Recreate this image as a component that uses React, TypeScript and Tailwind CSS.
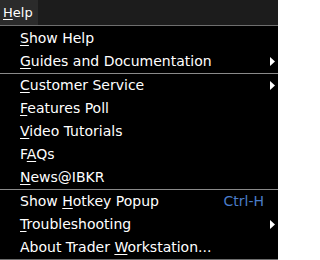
import React from "react";

type Item = {
  label: string;
  key: number; // index of underlined character
  sub?: boolean;
  hotkey?: string;
};

const groups: Item[][] = [
  [
    { label: "Show Help", key: 0 },
    { label: "Guides and Documentation", key: 0, sub: true },
  ],
  [
    { label: "Customer Service", key: 0, sub: true },
    { label: "Features Poll", key: 0 },
    { label: "Video Tutorials", key: 0 },
    { label: "FAQs", key: 1 },
    { label: "News@IBKR", key: 0 },
  ],
  [
    { label: "Show Hotkey Popup", key: 5, hotkey: "Ctrl-H" },
    { label: "Troubleshooting", key: 0, sub: true },
    { label: "About Trader Workstation...", key: 13 },
  ],
];

function Mnemonic({ text, at }: { text: string; at: number }) {
  return (
    <span className="whitespace-pre">
      {text.slice(0, at)}
      <span className="underline underline-offset-2 decoration-1">{text[at]}</span>
      {text.slice(at + 1)}
    </span>
  );
}

function Arrow() {
  return (
    <svg width="5" height="9" viewBox="0 0 5 9" className="shrink-0">
      <path d="M0 0 L5 4.5 L0 9 Z" fill="#ffffff" />
    </svg>
  );
}

function Row({ item }: { item: Item }) {
  return (
    <div className="flex h-[23px] items-center pl-5 pr-[3px]">
      <span className="flex-1">
        <Mnemonic text={item.label} at={item.key} />
      </span>
      {item.hotkey && <span className="mr-[11px] text-[#4a7cc9]">{item.hotkey}</span>}
      {item.sub && <Arrow />}
    </div>
  );
}

export default function App() {
  return (
    <div
      className="h-[260px] w-[278px] overflow-hidden bg-black text-white"
      style={{ fontFamily: '"DejaVu Sans", sans-serif' }}
    >
      <div className="flex h-[25px] bg-[#1c1c1c] text-[13px]">
        <div className="flex items-center bg-[#2b2b2b] pl-[3px] pr-[5px]">
          <Mnemonic text="Help" at={0} />
        </div>
      </div>
      <div className="border-t border-[#6e6e6e]" />
      <div className="border-b border-[#6e6e6e] pt-px text-[14px]">
        {groups.map((g, gi) => (
          <div key={gi} className={gi > 0 ? "border-t border-[#8a8a8a]" : ""}>
            {g.map((item) => (
              <Row key={item.label} item={item} />
            ))}
          </div>
        ))}
      </div>
    </div>
  );
}
